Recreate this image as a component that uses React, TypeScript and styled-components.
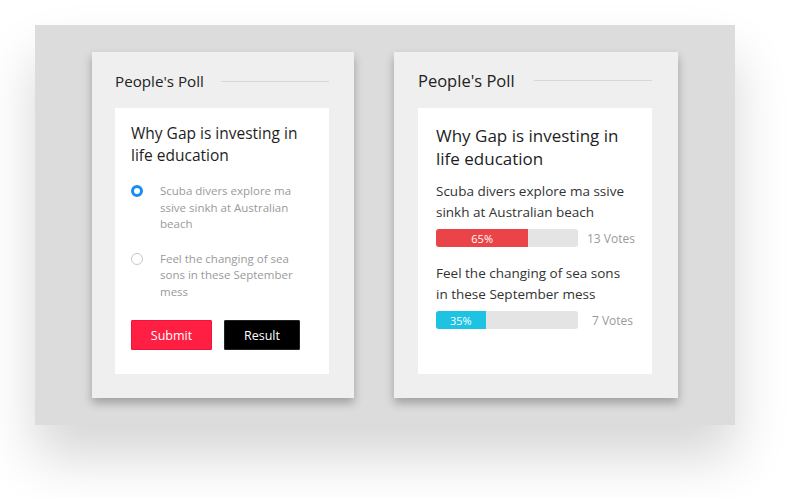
import React from "react";
import styled, { createGlobalStyle } from "styled-components";

const Global = createGlobalStyle`
  html, body { margin: 0; padding: 0; background: #ffffff; }
  body { font-family: "Open Sans", "Noto Sans", sans-serif; width: 798px; height: 498px; overflow: hidden; }
  * { box-sizing: border-box; }
`;

const Page = styled.div`
  padding: 25px 0 0 35px;
`;

const Panel = styled.div`
  width: 700px;
  height: 400px;
  background: #dcdcdc;
  box-shadow: 0 32px 50px rgba(0, 0, 0, 0.16);
  display: flex;
  align-items: flex-start;
  gap: 40px;
  padding: 27px 0 0 57px;
`;

const Card = styled.div<{ $w: number }>`
  width: ${(p) => p.$w}px;
  height: 346px;
  background: #efefef;
  box-shadow: 0 5px 9px rgba(0, 0, 0, 0.28);
  padding: 0 ${(p) => (p.$w > 270 ? 26 : 25)}px 24px ${(p) => (p.$w > 270 ? 24 : 23)}px;
  display: flex;
  flex-direction: column;
`;

const Header = styled.div<{ $big?: boolean }>`
  height: 56px;
  display: flex;
  align-items: center;
  gap: ${(p) => (p.$big ? 19 : 17)}px;
  padding-top: ${(p) => (p.$big ? 0 : 2)}px;
`;

const HeaderTitle = styled.h3<{ $big?: boolean }>`
  margin: 0;
  font-size: ${(p) => (p.$big ? 16.5 : 15.2)}px;
  font-weight: 400;
  color: #222;
  white-space: nowrap;
`;

const HeaderLine = styled.div`
  flex: 1;
  height: 1px;
  background: #d6d6d6;
`;

const Body = styled.div<{ $pad: number; $top: number }>`
  flex: 1;
  background: #ffffff;
  padding: ${(p) => p.$top}px ${(p) => p.$pad}px 0 ${(p) => p.$pad}px;
`;

const Question = styled.h4<{ $big?: boolean }>`
  margin: 0;
  font-size: ${(p) => (p.$big ? 17 : 15.5)}px;
  line-height: ${(p) => (p.$big ? 23 : 22)}px;
  font-weight: 500;
  color: #1e1e1e;
`;

const Options = styled.div`
  margin-top: 17px;
  display: flex;
  flex-direction: column;
  gap: 18px;
`;

const Option = styled.label`
  display: flex;
  align-items: flex-start;
  gap: 17px;
`;

const Radio = styled.span<{ $checked?: boolean }>`
  flex: none;
  width: 12px;
  height: 12px;
  margin-top: 2px;
  border-radius: 50%;
  background: #fff;
  border: ${(p) => (p.$checked ? "3.5px solid #1a8cf5" : "1px solid #c8c8c8")};
`;

const OptionText = styled.span`
  font-size: 11.5px;
  line-height: 16.5px;
  color: #9a9a9a;
  width: 140px;
`;

const Buttons = styled.div`
  margin-top: 20px;
  display: flex;
  gap: 12px;
`;

const Button = styled.button<{ $bg: string; $w: number }>`
  width: ${(p) => p.$w}px;
  height: 30px;
  border: 1px solid ${(p) => (p.$bg === "#000" ? "#222" : "#f0143a")};
  border-radius: 1px;
  background: ${(p) => p.$bg};
  color: #fff;
  font-family: inherit;
  font-size: 12.5px;
  padding: 0;
`;

const Result = styled.div`
  margin-top: 11px;
  display: flex;
  flex-direction: column;
  gap: 16px;
`;

const ResultItem = styled.div`
  display: flex;
  flex-direction: column;
`;

const ResultText = styled.div`
  font-size: 13.5px;
  line-height: 21px;
  color: #333;
`;

const BarRow = styled.div`
  margin-top: 6px;
  display: flex;
  align-items: center;
  gap: 9px;
`;

const Track = styled.div`
  flex: none;
  width: 142px;
  height: 18px;
  border-radius: 3px;
  background: #e4e4e4;
  overflow: hidden;
  display: flex;
`;

const Fill = styled.div<{ $c: string }>`
  height: 100%;
  background: ${(p) => p.$c};
  color: #fff;
  font-size: 11px;
  display: flex;
  align-items: center;
  justify-content: center;
`;

const Votes = styled.span`
  font-size: 12px;
  color: #9a9a9a;
  white-space: nowrap;
  flex: 1;
  text-align: right;
  padding-right: 1px;
`;

const results = [
  { text: "Scuba divers explore ma ssive sinkh at Australian beach", pct: 65, color: "#ea4448", votes: "13 Votes" },
  { text: "Feel the changing of sea sons in these September mess", pct: 35, color: "#1ec3e4", votes: "7 Votes" },
];

export default function App() {
  return (
    <>
      <Global />
      <Page>
        <Panel>
          <Card $w={262}>
            <Header>
              <HeaderTitle>People's Poll</HeaderTitle>
              <HeaderLine />
            </Header>
            <Body $pad={16} $top={14}>
              <Question>Why Gap is investing in life education</Question>
              <Options>
                <Option>
                  <Radio $checked />
                  <OptionText>Scuba divers explore ma ssive sinkh at Australian beach</OptionText>
                </Option>
                <Option>
                  <Radio />
                  <OptionText>Feel the changing of sea sons in these September mess</OptionText>
                </Option>
              </Options>
              <Buttons>
                <Button $bg="#ff1f42" $w={81}>Submit</Button>
                <Button $bg="#000" $w={76}>Result</Button>
              </Buttons>
            </Body>
          </Card>
          <Card $w={284}>
            <Header $big>
              <HeaderTitle $big>People's Poll</HeaderTitle>
              <HeaderLine />
            </Header>
            <Body $pad={18} $top={16}>
              <Question $big>Why Gap is investing in life education</Question>
              <Result>
                {results.map((r) => (
                  <ResultItem key={r.votes}>
                    <ResultText>{r.text}</ResultText>
                    <BarRow>
                      <Track>
                        <Fill $c={r.color} style={{ width: `${r.pct}%` }}>{r.pct}%</Fill>
                      </Track>
                      <Votes>{r.votes}</Votes>
                    </BarRow>
                  </ResultItem>
                ))}
              </Result>
            </Body>
          </Card>
        </Panel>
      </Page>
    </>
  );
}
